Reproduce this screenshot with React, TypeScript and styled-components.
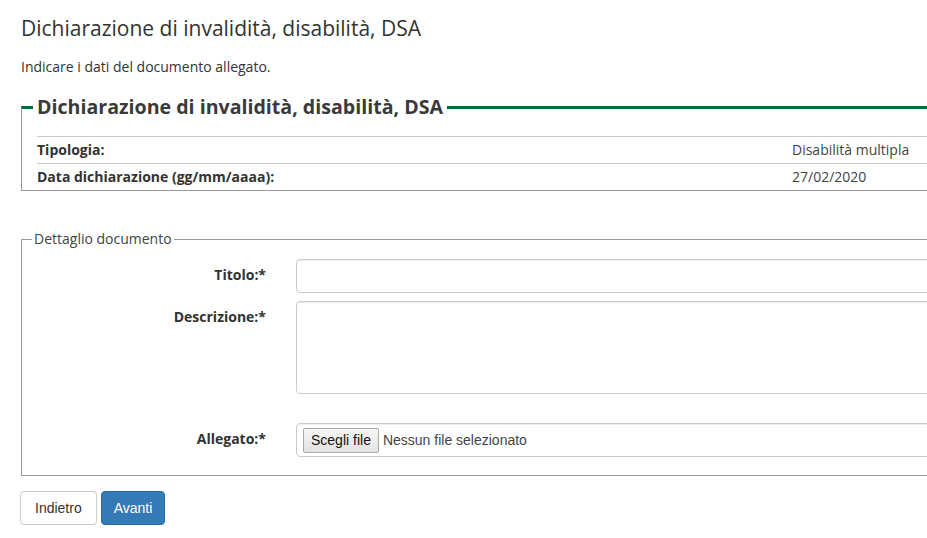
import styled, { createGlobalStyle } from "styled-components";

const GlobalStyle = createGlobalStyle`
    html, body {
        margin: 0;
        padding: 0;
        background: #ffffff;
        overflow: hidden;
    }
    body {
        font-family: "Open Sans", "Liberation Sans", Arial, sans-serif;
        font-size: 14px;
        color: #333333;
    }
`;

const Page = styled.div`
    width: 1000px;
    padding: 15px 0 0 21px;
    box-sizing: border-box;
`;

const Title = styled.h1`
    margin: 0;
    font-size: 21px;
    line-height: 26px;
    font-weight: 400;
    color: #333333;
`;

const Intro = styled.p`
    margin: 17px 0 0;
    font-size: 14px;
    line-height: 18px;
`;

const SummaryBox = styled.fieldset`
    margin: 20px 0 0;
    padding: 0 0 0 11px;
    border: none;
    border-top: 3px solid #05673a;
    border-left: 1px solid #9a9a9a;
    border-bottom: 1px solid #9a9a9a;
`;

const SummaryLegend = styled.legend`
    padding: 0 4px;
    font-size: 19.6px;
    line-height: 22px;
    font-weight: 700;
    color: #3a3a3a;
`;

const InfoTable = styled.div`
    margin: 18px 0 0 4px;
    display: grid;
    grid-template-columns: 1fr 208px;
`;

const InfoCell = styled.div<{ $bold?: boolean }>`
    border-top: 1px solid #cccccc;
    height: 26px;
    line-height: 26px;
    font-size: 14px;
    font-weight: ${(p) => (p.$bold ? 700 : 400)};
    color: ${(p) => (p.$bold ? "#333333" : "#444444")};
`;

const DetailBox = styled.fieldset`
    margin: 39px 0 0;
    padding: 11px 0 18px 10px;
    border: 1px solid #9a9a9a;
    border-right: none;
`;

const DetailLegend = styled.legend`
    padding: 0 2px;
    font-size: 14px;
    line-height: 18px;
    color: #444444;
`;

const FormRow = styled.div<{ $gap: number }>`
    display: grid;
    grid-template-columns: 234px 1fr;
    column-gap: 30px;
    margin-bottom: ${(p) => p.$gap}px;
`;

const Label = styled.label`
    text-align: right;
    font-weight: 700;
    font-size: 14px;
    line-height: 20px;
    padding-top: 6px;
    color: #333333;
`;

const TextInput = styled.div<{ $height: number }>`
    height: ${(p) => p.$height}px;
    border: 1px solid #cccccc;
    border-radius: 4px;
    box-sizing: border-box;
    box-shadow: inset 0 1px 1px rgba(0, 0, 0, 0.075);
    display: flex;
    align-items: center;
    padding-left: 6px;
`;

const FileButton = styled.span`
    display: inline-block;
    height: 25px;
    box-sizing: border-box;
    padding: 0 7px;
    line-height: 23px;
    border: 1px solid #a9a9a9;
    border-radius: 2px;
    background: linear-gradient(#f6f6f6, #e3e3e3);
    font-family: "Liberation Sans", Arial, sans-serif;
    font-size: 14px;
    color: #111111;
`;

const FileName = styled.span`
    margin-left: 4px;
    font-family: "Liberation Sans", Arial, sans-serif;
    font-size: 14px;
    color: #444444;
`;

const Actions = styled.div`
    margin: 15px 0 0 -1px;
    display: flex;
    gap: 4px;
`;

const Button = styled.button<{ $primary?: boolean }>`
    height: 34px;
    padding: 0 ${(p) => (p.$primary ? 12 : 14)}px;
    border-radius: 4px;
    font-family: "Liberation Sans", Arial, sans-serif;
    font-size: 14px;
    border: 1px solid ${(p) => (p.$primary ? "#2e6da4" : "#cccccc")};
    background: ${(p) => (p.$primary ? "#337ab7" : "#ffffff")};
    color: ${(p) => (p.$primary ? "#ffffff" : "#333333")};
`;

export default function App() {
    return (
        <>
            <GlobalStyle />
            <Page>
                <Title>Dichiarazione di invalidità, disabilità, DSA</Title>
                <Intro>Indicare i dati del documento allegato.</Intro>

                <SummaryBox>
                    <SummaryLegend>Dichiarazione di invalidità, disabilità, DSA</SummaryLegend>
                    <InfoTable>
                        <InfoCell $bold>Tipologia:</InfoCell>
                        <InfoCell>Disabilità multipla</InfoCell>
                        <InfoCell $bold>Data dichiarazione (gg/mm/aaaa):</InfoCell>
                        <InfoCell>27/02/2020</InfoCell>
                    </InfoTable>
                </SummaryBox>

                <DetailBox>
                    <DetailLegend>Dettaglio documento</DetailLegend>
                    <FormRow $gap={8}>
                        <Label>Titolo:*</Label>
                        <TextInput $height={34} />
                    </FormRow>
                    <FormRow $gap={29}>
                        <Label>Descrizione:*</Label>
                        <TextInput $height={93} />
                    </FormRow>
                    <FormRow $gap={0}>
                        <Label>Allegato:*</Label>
                        <TextInput $height={34}>
                            <FileButton>Scegli file</FileButton>
                            <FileName>Nessun file selezionato</FileName>
                        </TextInput>
                    </FormRow>
                </DetailBox>

                <Actions>
                    <Button>Indietro</Button>
                    <Button $primary>Avanti</Button>
                </Actions>
            </Page>
        </>
    );
}
